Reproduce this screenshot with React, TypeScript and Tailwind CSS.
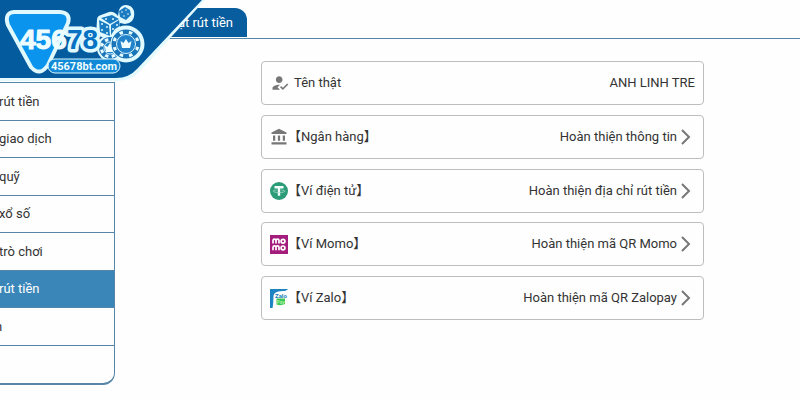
import React from "react";
import { MdAccountBalance, MdHowToReg } from "react-icons/md";

const TetherIcon = () => (
  <svg viewBox="0 0 18 18" className="size-[18px]" aria-hidden="true">
    <circle cx="9" cy="9" r="9" fill="#2c9c78" />
    <path d="M4.500 4h9v2.400h-3.300v7.400H7.800V6.400H4.500z" fill="#f3fffb" />
    <path d="M6.500 8C1.500 8.500 2 10.500 9 10.500s7.500-2 2.500-2.500" fill="none" stroke="#b5e3d3" strokeWidth=".7" />
  </svg>
);

const MomoIcon = () => (
  <svg viewBox="0 0 18 19" className="h-[19px] w-[18px]" aria-hidden="true">
    <path d="M0 0h18v19H0z" fill="#a41c7c" />
    <g fill="none" stroke="#fff" strokeWidth="1.7">
      <path d="M3 8.600V5.600a1.500 1.500 0 0 1 3 0v3m0-3a1.500 1.500 0 0 1 3 0v3" />
      <circle cx="13" cy="6.200" r="1.900" />
      <path d="M3 15.300v-3a1.500 1.500 0 0 1 3 0v3m0-3a1.500 1.500 0 0 1 3 0v3" />
      <circle cx="13" cy="12.900" r="1.900" />
    </g>
  </svg>
);

const ZaloIcon = () => (
  <svg viewBox="0 0 18 19" className="h-[19px] w-[18px]" aria-hidden="true">
    <path d="M0 0h18.500L15 2C8 2 4 3 3.500 7 3.200 11 3.500 15 2.500 19H0z" fill="#1c84c0" />
    <path d="M6.500 9.500H15V15q-4 2-8.500.5z" fill="#3cc653" />
    <text x="5" y="9" fontSize="6" fontWeight="700" fill="#237fb9" className="font-['Roboto',sans-serif]">
      Zalo
    </text>
    <text x="6.500" y="14.500" fontSize="5" fontWeight="700" fill="#a4efa0" className="font-['Roboto',sans-serif]">
      Pay
    </text>
  </svg>
);

const ArrowIcon = () => (
  <svg viewBox="0 0 10 16" className="h-4 w-[10px]" aria-hidden="true">
    <path d="M1 1l7 7-7 7" fill="none" stroke="#777" strokeWidth="2" />
  </svg>
);

const menu = [
  { label: "rút tiền" },
  { label: "giao dịch" },
  { label: "quỹ" },
  { label: "xổ số" },
  { label: "trò chơi" },
  { label: "rút tiền", active: true },
  { label: "n", clipped: true },
  { label: "" },
];

const methods = [
  { label: "【Ngân hàng】", action: "Hoàn thiện thông tin", icon: <MdAccountBalance className="size-[18px] text-[#777]" /> },
  { label: "【Ví điện tử】", action: "Hoàn thiện địa chỉ rút tiền", icon: <TetherIcon /> },
  { label: "【Ví Momo】", action: "Hoàn thiện mã QR Momo", icon: <MomoIcon /> },
  { label: "【Ví Zalo】", action: "Hoàn thiện mã QR Zalopay", icon: <ZaloIcon /> },
];

const chipAngles = [22, 67, 112, 157, 202, 247, 292, 337];

const Chip: React.FC<{ x: number; y: number; r: number }> = ({ x, y, r }) => (
  <g transform={`translate(${x} ${y})`}>
    <circle r={r} fill="#1a74b8" />
    {chipAngles.map((a) => (
      <path
        key={a}
        d={`M-2 ${1 - r}H2L1.500 ${4 - r}H-1.500Z`}
        transform={`rotate(${a})`}
        fill="#e6fbff"
      />
    ))}
    <circle r={r - 5} fill="#2283cb" stroke="#d5f5ff" strokeWidth="1" />
    <path d="M-5.500-3l3 2L0-5l2.500 4 3-2L4 4h-8z" fill="#effdff" />
  </g>
);

// Brand ribbon that hangs over the top left corner
const Banner = () => (
  <svg viewBox="0 0 206 83" className="pointer-events-none absolute left-0 top-0 h-[83px] w-[206px]" role="img" aria-label="45678bt.com">
    <path d="M0 0H205L141 70Q132 81 117 81H0z" fill="#e4faff" />
    <path d="M0 0H202L137 69Q129 78 116 78H0z" fill="#045c9f" />
    <g strokeLinejoin="round">
      <path d="M14 12H60Q71 13 68 23L48 65Q40 77 31 67L8 25Q4 13 14 12Z" fill="#0b94ee" stroke="#dff9ff" strokeWidth="4" />
      <g fill="#e1faff">
        <path d="M97 20q0-4 4-5l8-3q5-1 9 4l1-6q2-5 7-5 6 0 8 6 1 6-2 10-3 3-7 3l-5-1v8l-12 8-12-4z" />
        <circle cx="110" cy="48" r="13" />
        <circle cx="126" cy="44" r="18.500" />
      </g>
      <g fill="#1b7bc0">
        <path d="M101 18l11-3 7 4-9 5z" />
        <path d="M99 20l10 5 1 11-10-4z" />
        <path d="M111 25l8-5 1 6-5 3-4 6z" />
        <path d="M125 7l5 3 1 5-5 5-6-3-1-6z" />
      </g>
      <g fill="#e1faff">
        <circle cx="106" cy="19" r="1" />
        <circle cx="113" cy="19" r="1" />
        <circle cx="102" cy="24" r="1" />
        <circle cx="107" cy="27" r="1" />
        <circle cx="102" cy="30" r="1" />
        <circle cx="107" cy="33" r="1" />
        <circle cx="113" cy="29" r="1" />
        <circle cx="117" cy="25" r="1" />
        <circle cx="122" cy="12" r=".8" />
        <circle cx="126" cy="10" r=".8" />
        <circle cx="128" cy="14" r=".8" />
        <circle cx="124" cy="16" r=".8" />
      </g>
      <Chip x={110} y={48} r={11} />
      <circle cx="126" cy="44" r="15.500" fill="#e1faff" />
      <Chip x={126} y={44} r={14.5} />
      <g fontSize="28" fontWeight="700" className="font-['Liberation_Sans',sans-serif]">
        <text x="67" y="49" fill="#0672c3" stroke="#dff9ff" strokeWidth="7" paintOrder="stroke">
          78
        </text>
        <text x="20" y="49" fill="#effdff" stroke="#effdff" strokeWidth="1">
          456
        </text>
      </g>
      <rect x="48" y="59" width="72" height="14" rx="7" fill="#1189d6" stroke="#dff9ff" strokeWidth="1" />
      <text x="84" y="70" textAnchor="middle" fontSize="11" fontWeight="700" fill="#effdff" className="font-['Roboto',sans-serif]">
        45678bt.com
      </text>
    </g>
  </svg>
);

const Sidebar = () => (
  <nav className="w-[115px] shrink-0 pt-[43px]">
    <ul className="grid min-h-[303px] auto-rows-fr overflow-hidden rounded-br-xl border-b-2 border-r border-t border-[#5585a8]">
      {menu.map((item, i) => (
        <li key={i} className="flex border-b border-[#5585a8] last:border-b-0">
          <button
            className={`flex w-full items-center pt-px text-left ${
              item.active ? "bg-[#3b86b9] text-white" : "text-[#333]"
            }`}
          >
            <span className={item.clipped ? "-ml-[5px]" : "-ml-px"}>{item.label}</span>
          </button>
        </li>
      ))}
    </ul>
  </nav>
);

const App: React.FC = () => {
  return (
    <div className="relative min-h-screen overflow-hidden bg-[#fefefe] font-['Roboto','Noto_Sans_CJK_SC',sans-serif] text-[13px] leading-5 text-[#333]">
      <header className="flex h-[39px] items-end border-b border-[#5585a8] pl-[110px]">
        <button className="mb-px h-[29px] w-[137px] rounded-tr-xl bg-[#075d9d] pr-[14px] text-right text-white">
          Cài đặt rút tiền
        </button>
      </header>

      <div className="flex">
        <Sidebar />
        <main className="flex min-h-[280px] grow flex-col pl-[146px] pr-24 pt-[22px]">
          <div className="flex min-h-[259px] flex-col justify-between">
            <div className="flex h-[44px] items-center rounded border border-[#bdbdbd] px-2">
              <MdHowToReg className="size-5 text-[#777]" />
              <span className="ml-1">Tên thật</span>
              <span className="ml-auto">ANH LINH TRE</span>
            </div>
            {methods.map((m) => (
              <button key={m.label} className="flex h-[44px] items-center rounded border border-[#bdbdbd] pl-2 pr-3">
                {m.icon}
                <span>{m.label}</span>
                <span className="ml-auto mr-1">{m.action}</span>
                <ArrowIcon />
              </button>
            ))}
          </div>
        </main>
      </div>

      <Banner />
    </div>
  );
};

export default App;
